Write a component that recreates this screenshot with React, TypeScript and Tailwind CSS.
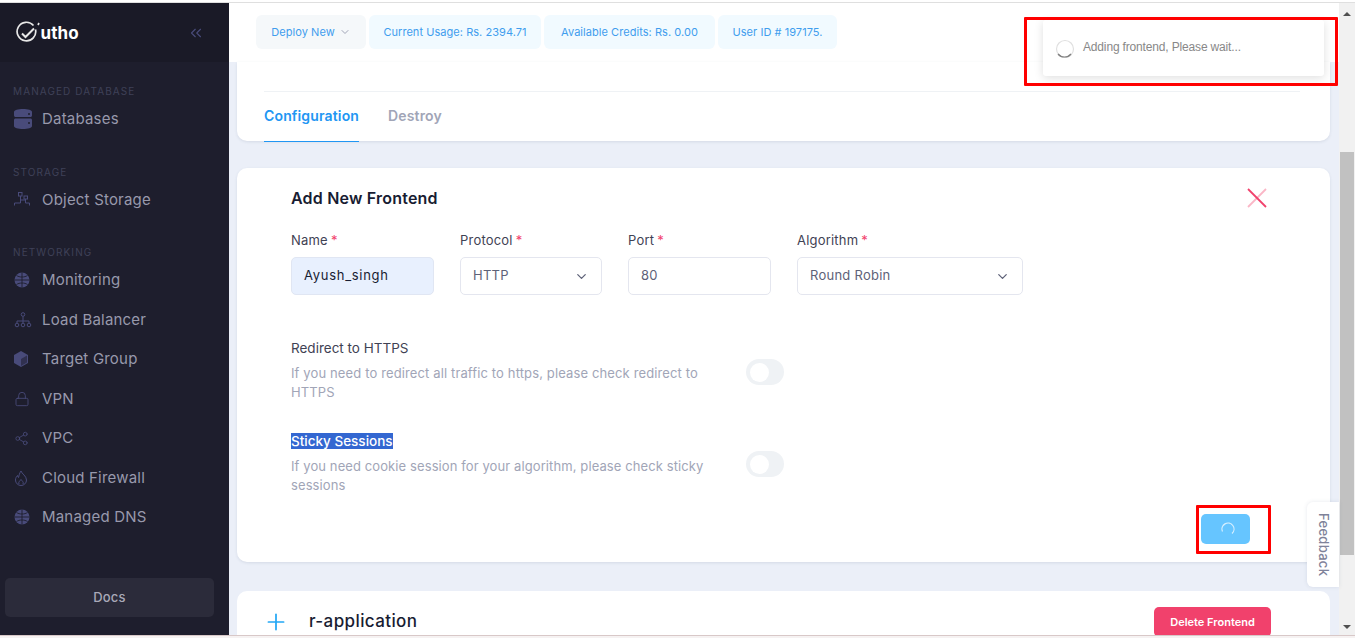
import { ChevronDown, ChevronsLeft, Lock, Plus, Share2 } from "lucide-react";
import type { ReactNode } from "react";

const iconColor = "#494b7a";

function DbIcon() {
    return (
        <svg width="18" height="20" viewBox="0 0 18 20" fill={iconColor}>
            <path d="M0 3c0-2 4-3 9-3s9 1 9 3v3.500c0 .8-.7 1.500-1.500 1.500h-15C.7 8 0 7.300 0 6.500z" />
            <path d="M0 11c0-.8.7-1.500 1.500-1.500h15c.8 0 1.500.7 1.500 1.500v6c0 2-4 3-9 3s-9-1-9-3z" />
            <circle cx="15" cy="5" r="1" fill="#1e1e2d" />
            <circle cx="15" cy="14" r="1" fill="#1e1e2d" />
        </svg>
    );
}

function StorageIcon() {
    return (
        <svg width="16" height="16" viewBox="0 0 16 16" fill="none" stroke={iconColor} strokeWidth="1">
            <rect x="4.500" y=".5" width="3.500" height="3.500" />
            <rect x="10" y="4" width="3.500" height="3" />
            <path d="M.5 13.500V11h6V8h5.500M11.500 7v4h4v2.500M6.500 8V4" />
        </svg>
    );
}

function GlobeIcon() {
    return (
        <svg width="16" height="16" viewBox="0 0 16 16" fill={iconColor}>
            <circle cx="8" cy="8" r="7.500" />
            <path d="M.5 8h15M8 .5v15M2.500 3.500c3 2 8 2 11 0M2.500 12.500c3-2 8-2 11 0" stroke="#1e1e2d" strokeWidth=".9" fill="none" />
        </svg>
    );
}

function BalancerIcon() {
    return (
        <svg width="18" height="16" viewBox="0 0 18 16" fill="none" stroke={iconColor} strokeWidth="1">
            <circle cx="9" cy="2.500" r="1.800" />
            <path d="M9 4.500V9M3 11V9h12v2M9 9v2" />
            <circle cx="3" cy="13" r="1.800" />
            <circle cx="9" cy="13" r="1.800" />
            <circle cx="15" cy="13" r="1.800" />
        </svg>
    );
}

function BoxIcon() {
    return (
        <svg width="14" height="16" viewBox="0 0 14 16">
            <path d="M7 0l7 4v8l-7 4-7-4V4z" fill={iconColor} />
            <path d="M7 8l6-3.500v7L7 15z" fill="#1e1e2d" opacity=".55" />
        </svg>
    );
}

function FlameIcon() {
    return (
        <svg width="14" height="16" viewBox="0 0 14 16" fill="none" stroke={iconColor} strokeWidth="1">
            <path d="M7 1c.5 2.500 5.500 5 5.500 9a5.500 5.500 0 0 1-11 0c0-2 1-3.500 2-4.500 0 1 .5 1.800 1 2C5 5.500 5.500 3 7 1z" />
            <path d="M5 14c-1-2 1-3 2-4.500 1 1.500 3 2.500 2 4.500" />
        </svg>
    );
}

function SideSection({ title, children }: { title: string; children: ReactNode }) {
    return (
        <div className="mb-[24px]">
            <div className="pl-[13px] h-[17px] flex items-center text-[10px] leading-none tracking-[1.1px] text-[#3f4158]">{title}</div>
            {children}
        </div>
    );
}

function SideItem({ icon, label }: { icon: ReactNode; label: string }) {
    return (
        <div className="flex items-center h-[39.500px] text-[15px] tracking-[0.2px] text-[#9899ac]">
            <div className="w-[42px] pl-[14px] flex items-center shrink-0">{icon}</div>
            <span>{label}</span>
        </div>
    );
}

function Sidebar() {
    return (
        <aside className="w-[229px] shrink-0 bg-[#1e1e2d] flex flex-col">
            <div className="h-[59px] bg-[#1a1a27] flex items-center justify-between pl-[16px] pr-[26px]">
                <div className="flex items-center text-white">
                    <svg width="25" height="24" viewBox="0 0 25 24" fill="none" stroke="#e8e8e8" strokeWidth="1.700">
                        <path d="M17.500 4.500a9.300 9.300 0 1 0 2 4" />
                        <path d="M6 12.500l3.500 3.500L18 7.500" strokeWidth="2" />
                        <path d="M23 2l-1 2" />
                    </svg>
                    <span className="text-[17px] font-bold leading-none tracking-[0.1px] ml-[-0.500px] mt-[2px]">utho</span>
                </div>
                <ChevronsLeft size={18} color={iconColor} strokeWidth={1.500} className="mr-[-2px]" />
            </div>
            <div className="pt-[20.500px] flex-1 flex flex-col">
                <SideSection title="MANAGED DATABASE">
                    <SideItem icon={<DbIcon />} label="Databases" />
                </SideSection>
                <SideSection title="STORAGE">
                    <SideItem icon={<StorageIcon />} label="Object Storage" />
                </SideSection>
                <SideSection title="NETWORKING">
                    <SideItem icon={<GlobeIcon />} label="Monitoring" />
                    <SideItem icon={<BalancerIcon />} label="Load Balancer" />
                    <SideItem icon={<BoxIcon />} label="Target Group" />
                    <SideItem icon={<Lock size={16} color={iconColor} strokeWidth={1.300} />} label="VPN" />
                    <SideItem icon={<Share2 size={15} color={iconColor} strokeWidth={1.300} />} label="VPC" />
                    <SideItem icon={<FlameIcon />} label="Cloud Firewall" />
                    <SideItem icon={<GlobeIcon />} label="Managed DNS" />
                </SideSection>
            </div>
            <div className="ml-[5px] mr-[15px] mb-[18px] h-[39px] rounded-[5px] bg-[#2b2b3a] flex items-center justify-center text-[13px] font-medium tracking-[0.2px] text-[#a9a9b8]">
                Docs
            </div>
        </aside>
    );
}

function Chip({ children, width, gray }: { children: ReactNode; width: string; gray?: boolean }) {
    return (
        <div className={`${width} h-[34px] rounded-[6px] flex items-center justify-center text-[11px] tracking-[0.05px] text-[#3f9dee] ${gray ? "bg-[#f5f8fa]" : "bg-[#f1faff]"}`}>
            {children}
        </div>
    );
}

function Field({ label, width, children, filled }: { label: string; width: string; children: ReactNode; filled?: boolean }) {
    return (
        <div className={width}>
            <div className="h-[19px] flex items-center text-[13px] tracking-[0.2px] text-[#3f4254]">
                {label} <span className="text-[#f1416c] ml-[3px]">*</span>
            </div>
            <div className={`mt-[7px] h-[38px] rounded-[5px] border flex items-center justify-between pl-[12px] pr-[12px] text-[13px] ${filled ? "bg-[#e8f0fe] border-[#e0e6f3] text-[#181c32] tracking-[0.7px]" : "bg-white border-[#e4e6ef] text-[#5e6278] tracking-[0.25px]"}`}>
                {children}
            </div>
        </div>
    );
}

function Toggle() {
    return (
        <div className="w-[38px] h-[26px] rounded-full bg-[#eff2f5] flex items-center pl-[4px] shrink-0">
            <div className="w-[19px] h-[19px] rounded-full bg-white" />
        </div>
    );
}

function RedBox({ className }: { className: string }) {
    return <div className={`absolute border-[3px] border-[#ff0000] rounded-[1px] ${className}`} />;
}

export default function App() {
    return (
        <div className="relative w-[1355px] h-[638px] overflow-hidden flex flex-col bg-white font-['Inter',sans-serif]">
            <div className="h-[3px] shrink-0 bg-white border-b border-[#dfdfdf]" />
            <div className="flex-1 flex min-h-0">
                <Sidebar />
                <main className="flex-1 min-w-0 bg-[#ebeff8] overflow-hidden flex flex-col">
                    <header className="h-[59px] shrink-0 bg-white flex gap-[3px] pl-[27px] pt-[12px]">
                        <Chip width="w-[110px]" gray>
                            Deploy New <ChevronDown size={12} color="#a1a5b7" className="ml-[4px]" />
                        </Chip>
                        <Chip width="w-[172px]">Current Usage: Rs. 2394.71</Chip>
                        <Chip width="w-[171px]">Available Credits: Rs. 0.00</Chip>
                        <Chip width="w-[119px]">User ID # 197175.</Chip>
                    </header>
                    <div className="pl-[8px] pr-[9px]">
                        <section className="h-[79px] bg-white rounded-b-[10px] shadow-[0_1px_3px_rgba(60,70,110,0.12)] px-[27px] pt-[29px]">
                            <div className="border-t border-[#eff2f5] w-[1036px] flex gap-[29px] h-[50px] text-[14px] font-semibold tracking-[0.15px]">
                                <div className="h-[50px] pt-[14px] leading-[20px] border-b border-[#2196f3] text-[#2196f3]">Configuration</div>
                                <div className="pt-[14px] leading-[20px] text-[#a1a5b7]">Destroy</div>
                            </div>
                        </section>
                        <section className="mt-[27px] h-[394px] bg-white rounded-[10px] shadow-[0_1px_3px_rgba(60,70,110,0.12)] pl-[54px] pr-[60px] pt-[19px] pb-[18px] flex flex-col">
                            <div className="flex items-center justify-between h-[21px]">
                                <h2 className="text-[16px] font-semibold tracking-[0.2px] text-[#181c32]">Add New Frontend</h2>
                                <svg width="20" height="20" viewBox="0 0 20 20" fill="none" strokeWidth="1.800" className="mr-[3px] mt-[1px]">
                                    <path d="M1 19L19 1" stroke="#fbb6c6" />
                                    <path d="M1 1l18 18" stroke="#f1416c" />
                                </svg>
                            </div>
                            <div className="flex gap-[26px] mt-[23px]">
                                <Field label="Name" width="w-[143px]" filled>Ayush_singh</Field>
                                <Field label="Protocol" width="w-[142px]">
                                    HTTP <ChevronDown size={15} color="#5e6278" />
                                </Field>
                                <Field label="Port" width="w-[143px]">80</Field>
                                <Field label="Algorithm" width="w-[226px]">
                                    Round Robin <ChevronDown size={15} color="#5e6278" />
                                </Field>
                            </div>
                            <div className="mt-[43px] flex items-start">
                                <div className="w-[455px]">
                                    <div className="text-[13.500px] leading-[20px] text-[#3f4254]">Redirect to HTTPS</div>
                                    <p className="mt-[6px] text-[13px] tracking-[0.13px] leading-[19px] text-[#a1a5b7] w-[420px]">
                                        If you need to redirect all traffic to https, please check redirect to HTTPS
                                    </p>
                                </div>
                                <div className="mt-[21px]"><Toggle /></div>
                            </div>
                            <div className="mt-[30px] flex items-start">
                                <div className="w-[455px]">
                                    <div className="text-[13.500px] leading-[19px] font-medium"><span className="bg-[#3367d1] text-white">Sticky Sessions</span></div>
                                    <p className="mt-[6px] text-[13px] tracking-[0.1px] leading-[19px] text-[#a1a5b7] w-[420px]">
                                        If you need cookie session for your algorithm, please check sticky sessions
                                    </p>
                                </div>
                                <div className="mt-[19px]"><Toggle /></div>
                            </div>
                            <div className="flex justify-end mt-auto pr-[20px]">
                                <div className="w-[49px] h-[30px] rounded-[5px] bg-[#66c5ff] flex items-center justify-center pl-[5px]">
                                    <svg width="14" height="14" viewBox="0 0 14 14" fill="none" stroke="#d6efff" strokeWidth="1.200">
                                        <path d="M1.500 9.500A6 6 0 1 1 11 11.500" />
                                    </svg>
                                </div>
                            </div>
                        </section>
                        <section className="mt-[29px] h-[60px] bg-white rounded-t-[10px] pl-[27px] pr-[59px] pt-[16px] flex items-start justify-between">
                            <div className="flex items-center h-[30px]">
                                <Plus size={26} color="#22a7f5" strokeWidth={1.600} className="ml-[-1px]" />
                                <span className="ml-[20px] text-[17px] font-medium tracking-[0.4px] text-[#181c32]">r-application</span>
                            </div>
                            <div className="w-[117px] h-[30px] rounded-[5px] bg-[#f1416c] flex items-center justify-center text-[11px] font-semibold text-white">
                                Delete Frontend
                            </div>
                        </section>
                    </div>
                </main>
                <div className="w-[16px] shrink-0 bg-[#f1f1f1] flex flex-col items-center pt-[9px]">
                    <div className="w-0 h-0 border-x-[4px] border-x-transparent border-b-[4px] border-b-[#505050]" />
                    <div className="w-[14px] h-[403px] bg-[#c1c1c1] mt-[136px]" />
                    <div className="w-0 h-0 border-x-[4px] border-x-transparent border-t-[4px] border-t-[#505050] mt-[70px]" />
                </div>
            </div>
            <div className="h-[3px] shrink-0 bg-[#f6f2f2] border-t border-[#d8c8c8]" />

            {/* toast, highlight boxes and the feedback tab sit over the page */}
            <div className="absolute left-[1043px] top-[20px] w-[281px] h-[56px] bg-white rounded-[3px] shadow-[0_2px_10px_rgba(0,0,0,0.13)] flex items-center pl-[12px] font-['Liberation_Sans',sans-serif] text-[12px] tracking-[-0.16px] text-[#888888]">
                <svg width="20" height="20" viewBox="0 0 20 20" fill="none" strokeWidth="1.200" className="shrink-0 mt-[1px]">
                    <circle cx="10" cy="10" r="8.500" stroke="#e0e0e0" />
                    <path d="M3 15a8.500 8.500 0 0 0 13 0" stroke="#808080" />
                </svg>
                <span className="ml-[8px] mb-[2px]">Adding frontend, Please wait...</span>
            </div>
            <RedBox className="left-[1024px] top-[17px] w-[314px] h-[69px]" />
            <RedBox className="left-[1196px] top-[505px] w-[75px] h-[49px]" />
            <div className="absolute left-[1307px] top-[502px] w-[32px] h-[85px] bg-white rounded-l-[6px] shadow-[0_0_4px_rgba(60,70,110,0.12)] flex items-center justify-center [writing-mode:vertical-rl] text-[13px] tracking-[0.3px] font-medium text-[#7e8299]">
                Feedback
            </div>
        </div>
    );
}
